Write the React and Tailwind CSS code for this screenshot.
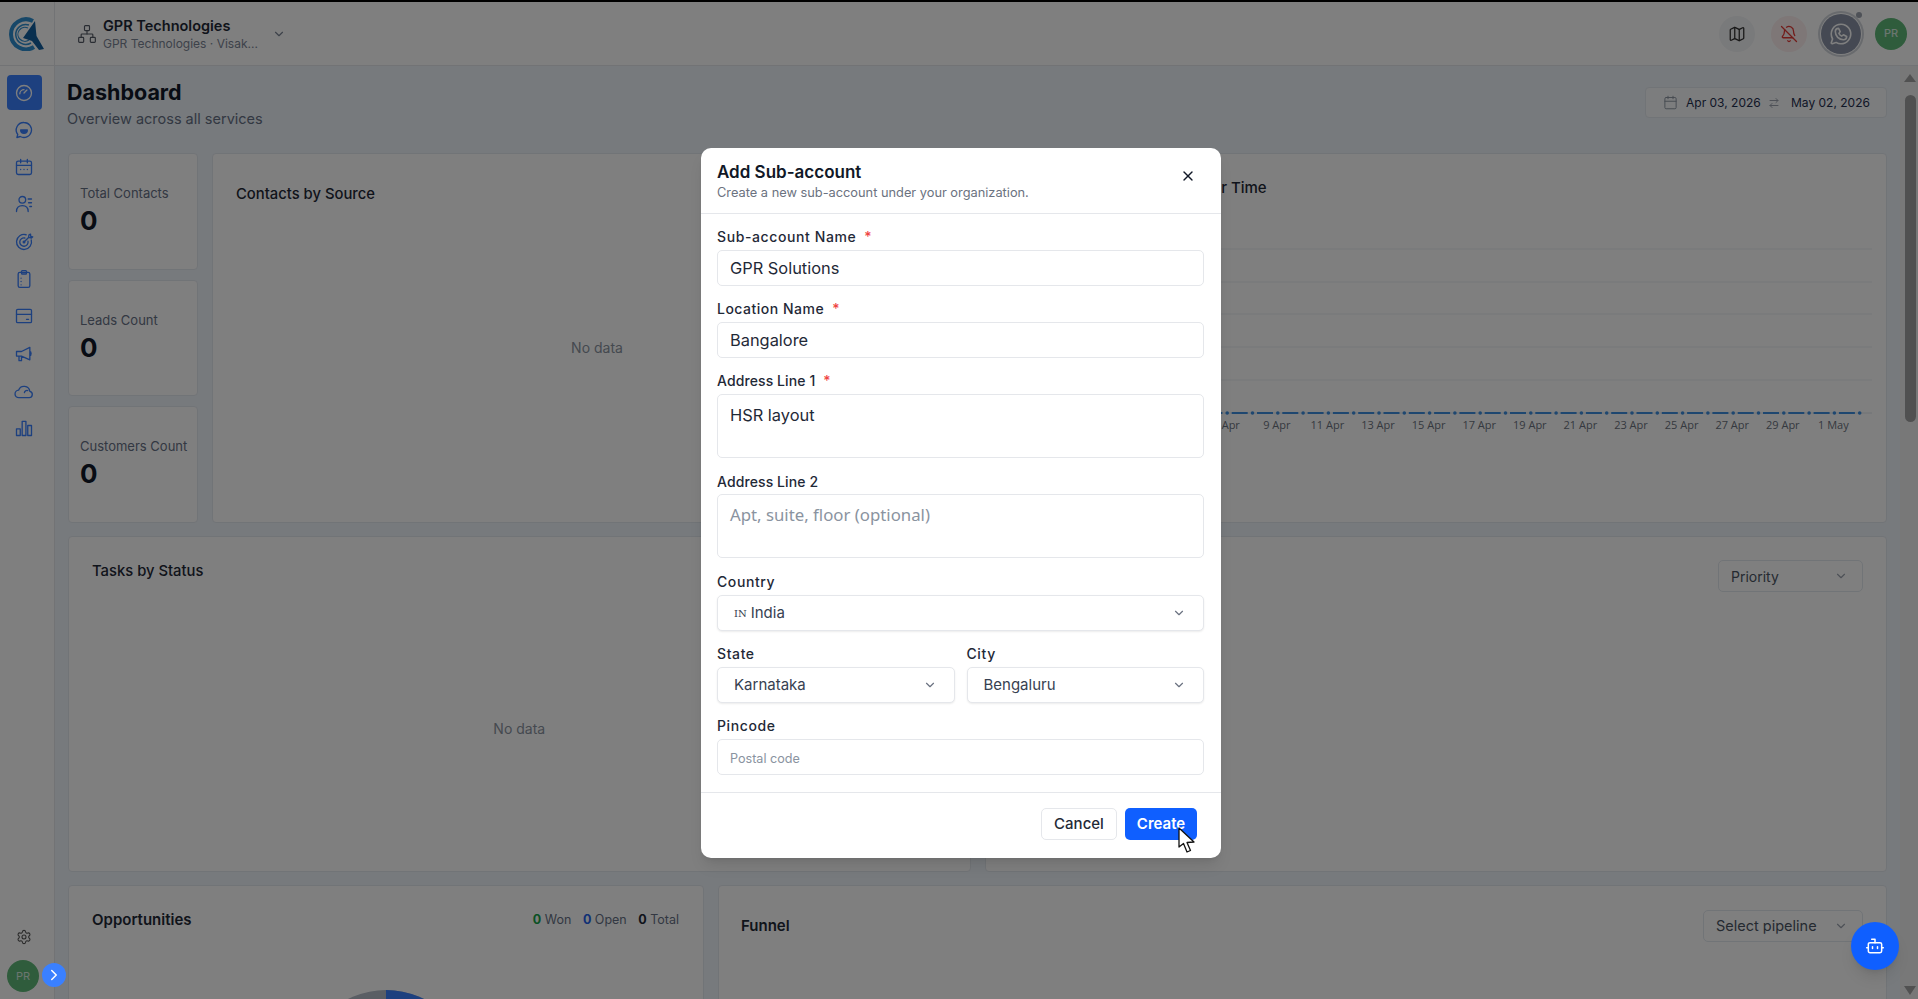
import React from "react";
import { ArrowRightLeft, BellOff, Bot, Calendar, ChevronDown, ChevronRight, Map as MapIcon, Network, Settings, X } from "lucide-react";
import { PiWhatsappLogo } from "react-icons/pi";

const Ico = ({ children, size = 20 }) => (
  <svg width={size} height={size} viewBox="0 0 24 24" fill="none" stroke="currentColor" strokeWidth="1.6" strokeLinecap="round" strokeLinejoin="round">
    {children}
  </svg>
);

const Logo = () => (
  <svg width="36" height="34" viewBox="0 0 36 34" fill="none">
    <path d="M24 4 A15 15 0 1 0 25 30" stroke="#2f8fd0" strokeWidth="4" />
    <path d="M20 8 A10 10 0 1 0 22 26" stroke="#2f8fd0" strokeWidth="1.5" />
    <path d="M19 11 A7 7 0 1 0 20 23" stroke="#2f8fd0" strokeWidth="1.2" />
    <polygon points="26,4 27.5,19 35,32 30,33 23,24 14,21" fill="#135f9e" />
  </svg>
);

const navIcons = [
  <><circle cx="12" cy="12" r="9" /><path d="M12 12l3.5-3.5" /><path d="M7 13a5 5 0 0 1 5-5" /></>,
  <><path d="M12 3a9 9 0 1 1-4.5 16.8L3.5 21l1-3.6A9 9 0 0 1 12 3z" /><path d="M8 12h8a4 4 0 0 1-8 0z" fill="currentColor" /></>,
  <><rect x="3" y="5" width="18" height="16" rx="2" /><path d="M3 10h18M8 3v4M16 3v4M8 15h.01M12 15h.01M16 15h.01" /></>,
  <><circle cx="10" cy="7" r="4" /><path d="M3 21c0-4.5 3-7 7-7s7 2.5 7 7M17 6h4M17.5 10.5h3.5M19 15h2" /></>,
  <><path d="M20.7 9.5a9 9 0 1 1-6.2-6.2" /><path d="M16.8 11a5 5 0 1 1-3.8-3.8" /><circle cx="12" cy="12" r="1" /><path d="M12 12l5.5-5.5M17.5 6.5l.5-3 1.8-1 .3 2.9 2.4.4-1.5 1.4z" /></>,
  <><rect x="5" y="4" width="14" height="18" rx="2" /><rect x="9" y="2" width="6" height="4" rx="1" /><path d="M8.5 11v.01M8.5 15v.01M8.5 19v.01" /></>,
  <><rect x="3" y="4" width="18" height="16" rx="1.5" /><path d="M3 10h18M15 16h2.5" /></>,
  <><path d="M3 9h6l10-5v15l-10-4.5H3zM6 14.5V20h3v-5.5M19 9c2 0 2 5 0 5" /></>,
  <><path d="M6 20a4.5 4.5 0 0 1-.5-9 7 7 0 0 1 13.5 1.5 3.8 3.8 0 0 1-1 7.5z" /><path d="M12.5 14a3 3 0 0 1 4-2.5" /></>,
  <><rect x="3" y="13" width="4.5" height="8" /><rect x="9.8" y="4" width="4.5" height="17" /><rect x="16.5" y="9" width="4.5" height="12" /></>,
];

const StatCard = ({ label }) => (
  <div className="flex-1 bg-white rounded-[4px] border border-[#e3e8ee] pl-[11px] pt-[30px]">
    <p className="text-[13px] leading-[18px] text-[#667085]">{label}</p>
    <p className="text-[26px] leading-[32px] font-bold text-[#101828] mt-[3px]">0</p>
  </div>
);

const Card = ({ children, className = "" }) => (
  <div className={"bg-white rounded-[4px] border border-[#e3e8ee] " + className}>{children}</div>
);

const Label = ({ text, required, className = "tracking-[0.6px]" }) => (
  <label className={"block h-[21px] mb-[3px] text-[14px] leading-[21px] font-medium text-[#1f2937] " + className}>
    {text}
    {required && <span className="text-[#ef4444] ml-[8px]">*</span>}
  </label>
);

const inputCls = "block w-full border border-[#e5e7eb] rounded-[5px] bg-white px-[12px] text-[#1f2937] outline-none";

const Select = ({ children }) => (
  <div className="h-[36px] border border-[#e5e7eb] rounded-[5px] shadow-[0_1px_2px_rgba(0,0,0,0.08)] bg-white flex items-center justify-between pl-[16px] pr-[17px] text-[15px] text-[#374151]">
    <span className="flex items-center">{children}</span>
    <ChevronDown size={14} className="text-[#6b7280]" />
  </div>
);

const TimeChart = () => {
  const dots = Array.from({ length: 30 }, (_, i) => 129 + i * 25.3);
  const names = ["3 Apr", "5 Apr", "7 Apr", "9 Apr", "11 Apr", "13 Apr", "15 Apr", "17 Apr", "19 Apr", "21 Apr", "23 Apr", "25 Apr", "27 Apr", "29 Apr", "1 May"];
  return (
    <svg width="889" height="220" viewBox="0 0 889 220" className="block">
      {[22, 55, 87, 120, 153].map((y) => (
        <line key={y} x1="128" x2="875" y1={y} y2={y} stroke="#e9edf1" />
      ))}
      <line x1="128" x2="875" y1="186" y2="186" stroke="#dfe4ea" />
      {dots.map((x, i) => (
        <g key={x}>
          <circle cx={x} cy="186" r="1.8" fill="#3d8ee0" />
          {i < 29 && <line x1={x + 4.5} x2={x + 20.5} y1="186" y2="186" stroke="#3d8ee0" strokeWidth="2" />}
        </g>
      ))}
      {names.map((n, i) => (
        <text key={n} x={128 + i * 50.6} y="202" textAnchor="middle" fontSize="11" fill="#6b7280" fontFamily="Open Sans, sans-serif">
          {n}
        </text>
      ))}
    </svg>
  );
};

const App = () => {
  return (
    <div className="relative h-screen w-full overflow-hidden flex flex-col bg-white font-[Inter,sans-serif]">
      <div className="h-[2px] bg-black shrink-0" />
      {/* Header */}
      <header className="h-[64px] shrink-0 flex items-center border-b border-[#e5e7eb] bg-white">
        <div className="w-[55px] h-full border-r border-[#e5e7eb] flex items-center justify-center">
          <Logo />
        </div>
        <div className="flex items-center ml-[22px]">
          <Network size={20} strokeWidth={1.4} className="text-[#555b66]" />
          <div className="ml-[6px] w-[161px] whitespace-nowrap pt-[2px]">
            <p className="text-[14.5px] leading-[18px] font-semibold text-[#1f2937]">GPR Technologies</p>
            <p className="text-[12px] leading-[17px] text-[#7b8494]">GPR Technologies · Visak...</p>
          </div>
          <ChevronDown size={14} className="text-[#7b8494] ml-[8px]" />
        </div>
        <div className="ml-auto flex items-center">
          <div className="w-[36px] h-[36px] rounded-full bg-[#f3f4f6] flex items-center justify-center text-[#333]">
            <MapIcon size={18} strokeWidth={1.7} />
          </div>
          <div className="w-[36px] h-[36px] rounded-full bg-[#fdeeee] flex items-center justify-center text-[#e53935] ml-[16px]">
            <BellOff size={18} strokeWidth={1.7} />
          </div>
          <div className="relative w-[40px] h-[40px] rounded-full bg-[#8a93a6] ring-[2px] ring-offset-[1px] ring-[#d1d5db] flex items-center justify-center text-white ml-[14px]">
            <PiWhatsappLogo size={26} />
            <span className="absolute -top-[2px] -right-[1px] w-[6px] h-[6px] rounded-full bg-[#9ca3af]" />
          </div>
          <div className="w-[32px] h-[32px] rounded-full bg-[#5fb878] text-[#d7ece0] text-[11px] font-medium flex items-center justify-center ml-[14px] mr-[11px]">
            PR
          </div>
        </div>
      </header>

      <div className="flex flex-1 min-h-0">
        {/* Sidebar */}
        <aside className="w-[55px] shrink-0 border-r border-[#e5e7eb] bg-white flex flex-col relative">
          <div className="flex flex-col items-center pt-[9px] pl-[1px] pr-[7px] gap-[2.3px]">
            {navIcons.map((icon, i) => (
              <div
                key={i}
                className={
                  i === 0
                    ? "w-[35px] h-[35px] rounded-[4px] bg-[#3a80ff] text-white flex items-center justify-center"
                    : "w-[35px] h-[35px] flex items-center justify-center text-[#3a80ff]"
                }
              >
                <Ico>{icon}</Ico>
              </div>
            ))}
          </div>
          <div className="mt-auto flex flex-col pb-[7px] pl-[7px]">
            <Settings size={16} strokeWidth={1.6} className="text-[#555] ml-[9px] mb-[15px]" />
            <div className="w-[32px] h-[32px] rounded-full bg-[#5fb878] text-[#d7ece0] text-[11px] flex items-center justify-center">PR</div>
          </div>
          <div className="absolute left-[42px] bottom-[12px] w-[24px] h-[24px] rounded-full bg-[#3a80ff] text-white flex items-center justify-center z-10">
            <ChevronRight size={18} />
          </div>
        </aside>

        {/* Content */}
        <main className="flex-1 min-w-0 overflow-hidden bg-[#eef5fa] px-[13px]">
          <div className="flex justify-between items-start h-[87px] pt-[12px]">
            <div>
              <h1 className="text-[21.5px] leading-[28px] font-bold text-[#101828] -ml-[1px]">Dashboard</h1>
              <p className="text-[14.5px] leading-[20px] mt-[3px] text-[#667085] -ml-[1px]">Overview across all services</p>
            </div>
            <div className="mt-[9px] w-[242px] h-[31px] bg-[#f8fafc] border border-[#e3e8ee] rounded-[4px] flex items-center pl-[17px] text-[12px] text-[#1f2f4f] whitespace-nowrap">
              <Calendar size={15} strokeWidth={1.5} className="text-[#8a93a0]" />
              <span className="ml-[8px] w-[73px]">Apr 03, 2026</span>
              <ArrowRightLeft size={12} className="text-[#9ca3af] ml-[9px] mr-[11px]" />
              <span>May 02, 2026</span>
            </div>
          </div>

          {/* Row 1 */}
          <div className="grid grid-cols-[130px_770px_1fr] gap-[14px] h-[370px]">
            <div className="flex flex-col gap-[10px]">
              <StatCard label="Total Contacts" />
              <StatCard label="Leads Count" />
              <StatCard label="Customers Count" />
            </div>
            <Card className="flex flex-col">
              <p className="pl-[23px] pt-[30px] text-[14.8px] leading-[20px] font-medium text-[#1f2937]">Contacts by Source</p>
              <div className="flex-1 flex items-center justify-center pb-[32px] text-[14px] text-[#8a93a0]">No data</div>
            </Card>
            <Card className="overflow-hidden">
              <p className="pl-[127px] pt-[24px] h-[73px] text-[15px] leading-[20px] font-medium text-[#1f2937]">Contacts Over Time</p>
              <TimeChart />
            </Card>
          </div>

          {/* Row 2 */}
          <div className="grid grid-cols-2 gap-[14px] h-[336px] mt-[13px]">
            <Card className="flex flex-col">
              <p className="pl-[23px] pt-[24px] text-[14.8px] leading-[20px] font-medium text-[#1f2937]">Tasks by Status</p>
              <div className="flex-1 flex items-center justify-center pt-[5px] text-[14px] text-[#8a93a0]">No data</div>
            </Card>
            <Card className="flex justify-end pt-[23px] pr-[23px]">
              <div className="w-[145px] h-[32px] border border-[#e3e8ee] rounded-[5px] flex items-center justify-between pl-[12px] pr-[14px] text-[14px] text-[#4b5563]">
                Priority
                <ChevronDown size={14} className="text-[#9ca3af]" />
              </div>
            </Card>
          </div>

          {/* Row 3 */}
          <div className="grid grid-cols-[636px_1fr] gap-[14px] h-[300px] mt-[13px]">
            <Card>
              <div className="flex justify-between items-center pl-[23px] pr-[24px] pt-[24px] h-[44px]">
                <p className="text-[15px] font-semibold text-[#1f2937]">Opportunities</p>
                <p className="text-[12.5px] text-[#667085]">
                  <b className="text-[#16a34a]">0</b> Won <b className="text-[#2563eb] ml-[8px]">0</b> Open <b className="text-[#1f2937] ml-[8px]">0</b> Total
                </p>
              </div>
              <div className="flex justify-center mt-[60px]">
                <svg width="170" height="170" viewBox="0 0 170 170">
                  <circle cx="85" cy="85" r="85" fill="#b4bcc8" />
                  <path d="M85 0 A85 85 0 0 1 85 170 z" fill="#3a80ff" />
                </svg>
              </div>
            </Card>
            <Card className="flex justify-between items-start pl-[22px] pr-[23px] pt-[24px]">
              <p className="text-[15px] leading-[32px] font-semibold text-[#1f2937]">Funnel</p>
              <div className="w-[160px] h-[32px] border border-[#e3e8ee] rounded-[5px] flex items-center justify-between pl-[12px] pr-[14px] text-[14.5px] text-[#4b5563]">
                Select pipeline
                <ChevronDown size={14} className="text-[#9ca3af]" />
              </div>
            </Card>
          </div>
        </main>

        {/* Scrollbar */}
        <div className="w-[18px] shrink-0 bg-[#f1f1f1] flex flex-col items-center pt-[8px] pb-[4px] pl-[2px]">
          <div className="w-0 h-0 border-x-[6px] border-x-transparent border-b-[8px] border-b-[#a3a3a3]" />
          <div className="w-[11px] h-[327px] mt-[13px] rounded-full bg-[#a0a0a0]" />
          <div className="mt-auto w-0 h-0 border-x-[6px] border-x-transparent border-t-[9px] border-t-[#a3a3a3]" />
        </div>
      </div>

      {/* Modal */}
      <div className="absolute inset-0 bg-black/50 flex justify-center items-start pt-[148px]">
        <div className="relative ml-[4px] w-[520px] h-[710px] bg-white rounded-[10px] shadow-lg flex flex-col">
          <div className="h-[66px] shrink-0 border-b border-[#e5e7eb] pl-[16px] pr-[24px] pt-[13px] flex justify-between">
            <div>
              <h2 className="text-[17px] leading-[22px] font-semibold text-[#111827]">Add Sub-account</h2>
              <p className="text-[12.8px] leading-[18px] mt-[1px] text-[#6b7280]">Create a new sub-account under your organization.</p>
            </div>
            <X size={16} strokeWidth={2} className="text-[#111827] mt-[7px] mr-[1px]" />
          </div>
          <div className="flex-1 pl-[16px] pr-[17px] pt-[12px] flex flex-col gap-[12px]">
            <div>
              <Label text="Sub-account Name" required />
              <input readOnly value="GPR Solutions" className={inputCls + " h-[36px] text-[16.4px]"} />
            </div>
            <div>
              <Label text="Location Name" required className="tracking-[0.5px]" />
              <input readOnly value="Bangalore" className={inputCls + " h-[36px] text-[16.4px]"} />
            </div>
            <div>
              <Label text="Address Line 1" required className="tracking-[0.1px]" />
              <textarea readOnly value="HSR layout" className={inputCls + " h-[64px] text-[16.4px] leading-[24px] py-[8px] resize-none"} />
            </div>
            <div>
              <Label text="Address Line 2" className="tracking-[0.1px] pt-[1px]" />
              <textarea readOnly placeholder="Apt, suite, floor (optional)" className={inputCls + " h-[64px] text-[16.8px] leading-[24px] py-[8px] resize-none placeholder:text-[#8a93a0] font-['Noto_Sans',sans-serif]"} />
            </div>
            <div className="mt-[1px]">
              <Label text="Country" />
              <Select>
                <span className="text-[10px] font-['DejaVu_Serif',serif] mr-[4px] text-[#374151]">IN</span>India
              </Select>
            </div>
            <div className="grid grid-cols-2 gap-[12px]">
              <div>
                <Label text="State" />
                <Select>Karnataka</Select>
              </div>
              <div>
                <Label text="City" />
                <Select>Bengaluru</Select>
              </div>
            </div>
            <div>
              <Label text="Pincode" />
              <input readOnly placeholder="Postal code" className={inputCls + " h-[36px] pt-[3px] text-[12.6px] placeholder:text-[#8a93a0]"} />
            </div>
          </div>
          <div className="h-[66px] shrink-0 border-t border-[#e5e7eb] flex justify-end gap-[8px] pt-[15px] pr-[24px]">
            <button className="w-[76px] h-[32px] border border-[#e5e7eb] rounded-[5px] bg-white text-[15px] font-medium text-[#1f2937]">Cancel</button>
            <button className="w-[72px] h-[32px] rounded-[5px] bg-[#0f5fff] text-white text-[15px] font-semibold">Create</button>
          </div>
          {/* mouse pointer */}
          <svg width="20" height="28" viewBox="0 0 20 28" className="absolute left-[476px] top-[679px]">
            <path d="M2 1 L2 20 L6.5 16.5 L10 25 L13.5 23.5 L10 15.5 L17 15 Z" fill="#fff" stroke="#111" strokeWidth="1.3" strokeLinejoin="round" />
          </svg>
        </div>
      </div>

      {/* Assistant button */}
      <div className="absolute left-[1851px] top-[922px] w-[48px] h-[48px] rounded-full bg-[#0f5fff] shadow-lg flex items-center justify-center text-white">
        <Bot size={20} strokeWidth={1.8} />
      </div>
    </div>
  );
};

export default App;
